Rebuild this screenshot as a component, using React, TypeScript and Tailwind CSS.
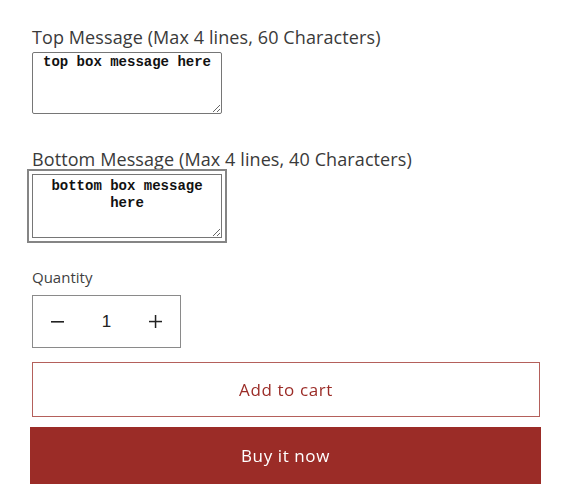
import { useEffect, useRef } from 'react';

const sans = "font-['Open_Sans','Noto_Sans',sans-serif]";

export default function App() {
  const bottomRef = useRef<HTMLTextAreaElement>(null);

  useEffect(() => {
    const el = bottomRef.current;
    if (!el) return;
    el.focus();
    el.setSelectionRange(el.value.length, el.value.length);
  }, []);

  return (
    <div className={`w-[585px] h-[500px] bg-white px-[32px] ${sans}`}>
      {/* top message */}
      <label className="block pt-[25px] text-[18px] leading-[24px] text-[#3a3a3a] tracking-[0.1px]">
        Top Message (Max 4 lines, 60 Characters)
      </label>
      <textarea
        defaultValue="top box message here"
        className="block mt-[3px] w-[190px] h-[62px] border border-[#767676] rounded-[2px] px-[2px] pt-[1px] text-center font-['Liberation_Mono',monospace] font-bold text-[14px] leading-[17px] text-[#111]"
      />

      {/* bottom message */}
      <label className="block mt-[33px] text-[18px] leading-[24px] text-[#3a3a3a] tracking-[0.1px]">
        Bottom Message (Max 4 lines, 40 Characters)
      </label>
      <textarea
        ref={bottomRef}
        defaultValue={'bottom box message here'}
        className="block mt-[3px] w-[190px] h-[64px] border border-[#767676] rounded-none px-[10px] pt-[3px] text-center font-['Liberation_Mono',monospace] font-bold text-[14px] leading-[17px] text-[#111] outline-2 outline-solid outline-[#858585] outline-offset-[3px]"
      />

      {/* quantity */}
      <div className="mt-[29px] text-[15px] leading-[20px] text-[#3f3f3f]">Quantity</div>
      <div className="mt-[8px] flex items-center w-[149px] h-[53px] border border-[#8a8a8a] text-[#222] font-['Liberation_Sans',sans-serif]">
        <button className="w-[49px] h-full flex items-center justify-center">
          <svg width="13" height="2" viewBox="0 0 13 2">
            <rect width="13" height="1.6" fill="#222" />
          </svg>
        </button>
        <span className="flex-1 text-center text-[17px]">1</span>
        <button className="w-[49px] h-full flex items-center justify-center">
          <svg width="13" height="13" viewBox="0 0 13 13">
            <rect x="0" y="5.8" width="13" height="1.5" fill="#222" />
            <rect x="5.8" y="0" width="1.5" height="13" fill="#222" />
          </svg>
        </button>
      </div>

      {/* actions */}
      <button className="mt-[14px] block w-[508px] h-[55px] border border-[#b4605b] bg-white text-[#9b2c27] text-[17px] tracking-[0.6px]">
        Add to cart
      </button>
      <button className="mt-[10px] -ml-[2px] block w-[511px] h-[57px] bg-[#9b2c27] text-white text-[17px] tracking-[0.6px]">
        Buy it now
      </button>
    </div>
  );
}
